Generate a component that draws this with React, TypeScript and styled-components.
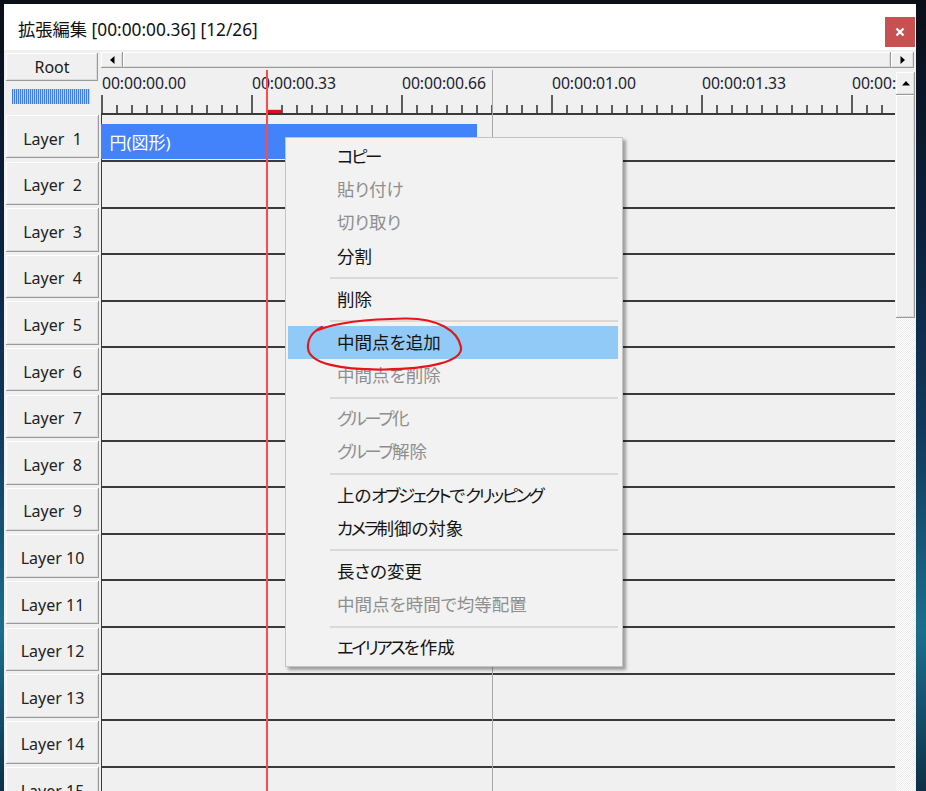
import React from "react";
import styled, { createGlobalStyle } from "styled-components";

const ROW_H = 46.6;
const LAYERS = Array.from({ length: 16 }, (_, i) => i + 1);
const LABELS = [
  "00:00:00.00",
  "00:00:00.33",
  "00:00:00.66",
  "00:00:01.00",
  "00:00:01.33",
  "00:00:01.66",
];

type MenuEntry = { label: string; disabled?: boolean; active?: boolean } | "sep";

const MENU: MenuEntry[] = [
  { label: "コピー" },
  { label: "貼り付け", disabled: true },
  { label: "切り取り", disabled: true },
  { label: "分割" },
  "sep",
  { label: "削除" },
  "sep",
  { label: "中間点を追加", active: true },
  { label: "中間点を削除", disabled: true },
  "sep",
  { label: "グループ化", disabled: true },
  { label: "グループ解除", disabled: true },
  "sep",
  { label: "上のオブジェクトでクリッピング" },
  { label: "カメラ制御の対象" },
  "sep",
  { label: "長さの変更" },
  { label: "中間点を時間で均等配置", disabled: true },
  "sep",
  { label: "エイリアスを作成" },
];

// katakana in the original UI font is much narrower than in Noto Sans CJK,
// so katakana runs get tightened
function splitKana(text: string) {
  const runs: { kana: boolean; text: string }[] = [];
  for (const ch of text) {
    const kana = /[\u30a0-\u30ff]/.test(ch);
    const last = runs[runs.length - 1];
    if (last && last.kana === kana) last.text += ch;
    else runs.push({ kana, text: ch });
  }
  return runs.map((r, i) =>
    r.kana ? <Kana key={i}>{r.text}</Kana> : <span key={i}>{r.text}</span>
  );
}

const GlobalStyle = createGlobalStyle`
  html, body {
    margin: 0;
    padding: 0;
    height: 791px;
    overflow: hidden;
  }
  body {
    font-family: "Noto Sans", "Noto Sans CJK JP", sans-serif;
    background: #08101c;
  }
`;

export default function App() {
  return (
    <Page>
      <GlobalStyle />
      <Window>
        <TitleBar>
          <Title>拡張編集 [00:00:00.36] [12/26]</Title>
          <CloseButton>
            <svg width="10" height="10" viewBox="0 0 10 10">
              <path d="M1.5 1.5 L8.5 8.5 M8.5 1.5 L1.5 8.5" stroke="#fff" strokeWidth="2.4" />
            </svg>
          </CloseButton>
        </TitleBar>

        <Client>
          <LeftHeader>
            <RootButton>Root</RootButton>
            <Meter />
          </LeftHeader>

          <HScroll>
            <ArrowButton $w={22}>
              <svg width="5" height="8" viewBox="0 0 5 8">
                <path d="M4.5 0 L0 4 L4.5 8 Z" fill="#000" />
              </svg>
            </ArrowButton>
            <HThumb />
            <ArrowButton $w={23}>
              <svg width="5" height="8" viewBox="0 0 5 8">
                <path d="M0.5 0 L5 4 L0.5 8 Z" fill="#000" />
              </svg>
            </ArrowButton>
          </HScroll>

          <Ruler>
            <RulerLabels>
              {LABELS.map((l) => (
                <RulerLabel key={l}>{l}</RulerLabel>
              ))}
            </RulerLabels>
            <svg width="795" height="18.4" style={{ display: "block" }}>
              {Array.from({ length: 53 }, (_, k) => {
                const x = 1 + k * 15;
                const major = k % 10 === 0;
                return (
                  <line
                    key={k}
                    x1={x}
                    x2={x}
                    y1={major ? 0 : 10}
                    y2={18.4}
                    stroke="#2c2c2c"
                    strokeWidth={1.5}
                  />
                );
              })}
              <rect x="167" y="14.8" width="14" height="3.6" fill="#e01010" />
              <rect x="165" y="14.8" width="1.5" height="3.6" fill="#30e0f0" />
            </svg>
          </Ruler>

          <VScroll>
            <VArrow>
              <svg width="8" height="5" viewBox="0 0 8 5">
                <path d="M0 4.5 L4 0 L8 4.5 Z" fill="#000" />
              </svg>
            </VArrow>
            <VThumb />
            <VTrack />
          </VScroll>

          <Rows>
            {LAYERS.map((n) => (
              <LayerRow key={n}>
                <LayerButton>{`Layer ${n < 10 ? " " : ""}${n}`}</LayerButton>
                <Track>
                  {n === 1 && <ObjectBar>円(図形)</ObjectBar>}
                </Track>
              </LayerRow>
            ))}
          </Rows>

          <Playhead>
            <EndLine />
            <CursorLine />
          </Playhead>
        </Client>
      </Window>

      <Menu>
        {MENU.map((m, i) =>
          m === "sep" ? (
            <Separator key={i} />
          ) : (
            <MenuItem key={i} $disabled={m.disabled} $active={m.active}>
              {splitKana(m.label)}
            </MenuItem>
          )
        )}
      </Menu>

      <Annotation width="926" height="791" viewBox="0 0 926 791">
        <path
          d="M318 330 C 338 322, 372 319, 405 318.5 C 438 318, 458 331, 461 347 C 463 362, 428 369, 384 369.5 C 342 370, 309 364, 308 348 C 307.5 338, 312 332, 322 327"
          fill="none"
          stroke="#e8141b"
          strokeWidth="2.2"
          strokeLinecap="round"
        />
      </Annotation>
    </Page>
  );
}

const Page = styled.div`
  position: relative;
  width: 926px;
  height: 791px;
  box-sizing: border-box;
  padding: 4px 0 0 4px;
  overflow: hidden;
  background: linear-gradient(
    180deg,
    #0b0f18 0px,
    #0b0f18 4px,
    #0a2240 30%,
    #123a5c 55%,
    #1b6f8c 80%,
    #0d3048 100%
  );
`;

const Window = styled.div`
  width: 912px;
  height: 820px;
  background: #f0f0f0;
  display: flex;
  flex-direction: column;
`;

const TitleBar = styled.div`
  height: 46px;
  flex: none;
  background: #ffffff;
  display: flex;
  align-items: center;
  justify-content: space-between;
  padding: 0 1px 0 14px;
`;

const Title = styled.div`
  font-size: 17.3px;
  color: #111;
  margin-top: 3px;
`;

const CloseButton = styled.div`
  align-self: flex-end;
  margin-bottom: 3px;
  width: 30px;
  height: 30px;
  background: #c75050;
  display: flex;
  align-items: center;
  justify-content: center;
`;

const Client = styled.div`
  flex: 1;
  display: grid;
  grid-template-columns: 97px 795px 20px;
  grid-template-rows: 18px 45.4px 1fr;
  overflow: hidden;
`;

const raised = `
  background: #f0f0f0;
  box-shadow: inset -1px -1px 0 #9a9a9a, inset 1px 1px 0 #ffffff,
    inset -2px -2px 0 #dcdcdc;
`;

const LeftHeader = styled.div`
  grid-column: 1;
  grid-row: 1 / 3;
  display: flex;
  flex-direction: column;
  padding: 3px 0 0 2px;
`;

const RootButton = styled.div`
  ${raised}
  width: 92px;
  height: 28px;
  display: flex;
  align-items: center;
  justify-content: center;
  font-size: 16px;
  color: #1a1a1a;
  box-sizing: border-box;
`;

const Meter = styled.div`
  margin: 8px 0 0 6px;
  width: 78px;
  height: 15px;
  background: repeating-linear-gradient(
    90deg,
    #3f7ce8 0px,
    #3f7ce8 1px,
    #b8d2f6 1px,
    #b8d2f6 2px
  );
`;

const HScroll = styled.div`
  grid-column: 2 / 4;
  grid-row: 1;
  display: flex;
  height: 16px;
  margin: 2px 2px 0 0;
`;

const ArrowButton = styled.div<{ $w: number }>`
  ${raised}
  width: ${(p) => p.$w}px;
  flex: none;
  display: flex;
  align-items: center;
  justify-content: center;
`;

const HThumb = styled.div`
  ${raised}
  flex: 1;
`;

const Ruler = styled.div`
  grid-column: 2;
  grid-row: 2;
  display: flex;
  flex-direction: column;
  justify-content: flex-end;
  overflow: hidden;
`;

const RulerLabels = styled.div`
  display: flex;
  padding-left: 1px;
  height: 22px;
  margin-bottom: 1px;
  overflow: hidden;
`;

const RulerLabel = styled.div`
  flex: none;
  width: 150px;
  font-size: 15.8px;
  line-height: 22px;
  color: #1c1c30;
  letter-spacing: -0.1px;
`;

const VScroll = styled.div`
  grid-column: 3;
  grid-row: 2 / 4;
  display: flex;
  flex-direction: column;
  padding: 3.6px 1px 0 0;
`;

const VArrow = styled.div`
  ${raised}
  height: 23px;
  flex: none;
  display: flex;
  align-items: center;
  justify-content: center;
`;

const VThumb = styled.div`
  ${raised}
  height: 223px;
  flex: none;
`;

const VTrack = styled.div`
  flex: 1;
  background-color: #f6f6f6;
  background-image: repeating-conic-gradient(#ffffff 0 25%, #ebebeb 0 50%);
  background-size: 2px 2px;
`;

const Rows = styled.div`
  grid-column: 1 / 3;
  grid-row: 3;
  display: flex;
  flex-direction: column;
`;

const LayerRow = styled.div`
  display: flex;
  height: ${ROW_H}px;
  flex: none;
`;

const LayerButton = styled.div`
  ${raised}
  width: 93px;
  height: 43.4px;
  margin: 1.6px 2px 0 2px;
  padding-top: 4px;
  box-sizing: border-box;
  display: flex;
  align-items: center;
  justify-content: center;
  white-space: pre;
  font-size: 16px;
  color: #222;
`;

const Track = styled.div`
  flex: 1;
  border-top: 2px solid #3a3a3a;
  border-left: 1.5px solid #3a3a3a;
  margin-right: 1px;
  display: flex;
  flex-direction: column;
`;

const ObjectBar = styled.div`
  margin: 9px 0 0 -1.5px;
  width: 376px;
  height: 35px;
  background: #4282fa;
  color: #ffffff;
  font-size: 17px;
  display: flex;
  align-items: center;
  padding-left: 9px;
  box-sizing: border-box;
`;

const Playhead = styled.div`
  grid-column: 2;
  grid-row: 2 / 4;
  position: relative;
  pointer-events: none;
  z-index: 2;
`;

const CursorLine = styled.div`
  position: absolute;
  left: 165px;
  top: 2px;
  bottom: 0;
  width: 2px;
  background-color: #ff4a4a;
`;

const EndLine = styled.div`
  position: absolute;
  left: 390.5px;
  top: 2px;
  bottom: 0;
  width: 1.5px;
  background-color: #a8a8a8;
`;

const Menu = styled.div`
  position: absolute;
  left: 285px;
  top: 137px;
  width: 338px;
  box-sizing: border-box;
  padding: 2px 4px 1px 2px;
  background: #f2f2f2;
  border: 1px solid #c4c4c4;
  box-shadow: 3px 3px 3px rgba(0, 0, 0, 0.35);
  z-index: 10;
  font-family: "Noto Sans CJK JP", sans-serif;
  font-feature-settings: "palt";
`;

const MenuItem = styled.div<{ $disabled?: boolean; $active?: boolean }>`
  height: 33.3px;
  box-sizing: border-box;
  display: flex;
  align-items: center;
  padding: 0 0 3px 49px;
  font-size: 17.5px;
  color: ${(p) => (p.$disabled ? "#8e8e8e" : "#141414")};
  background: ${(p) => (p.$active ? "#91c9f7" : "transparent")};
`;

const Kana = styled.span`
  letter-spacing: -2.4px;
`;

const Separator = styled.div`
  height: 9.8px;
  margin-left: 42px;
  display: flex;
  align-items: center;

  &::after {
    content: "";
    flex: 1;
    height: 2px;
    background: #d9d9d9;
  }
`;

const Annotation = styled.svg`
  position: absolute;
  left: 0;
  top: 0;
  pointer-events: none;
  z-index: 20;
`;
